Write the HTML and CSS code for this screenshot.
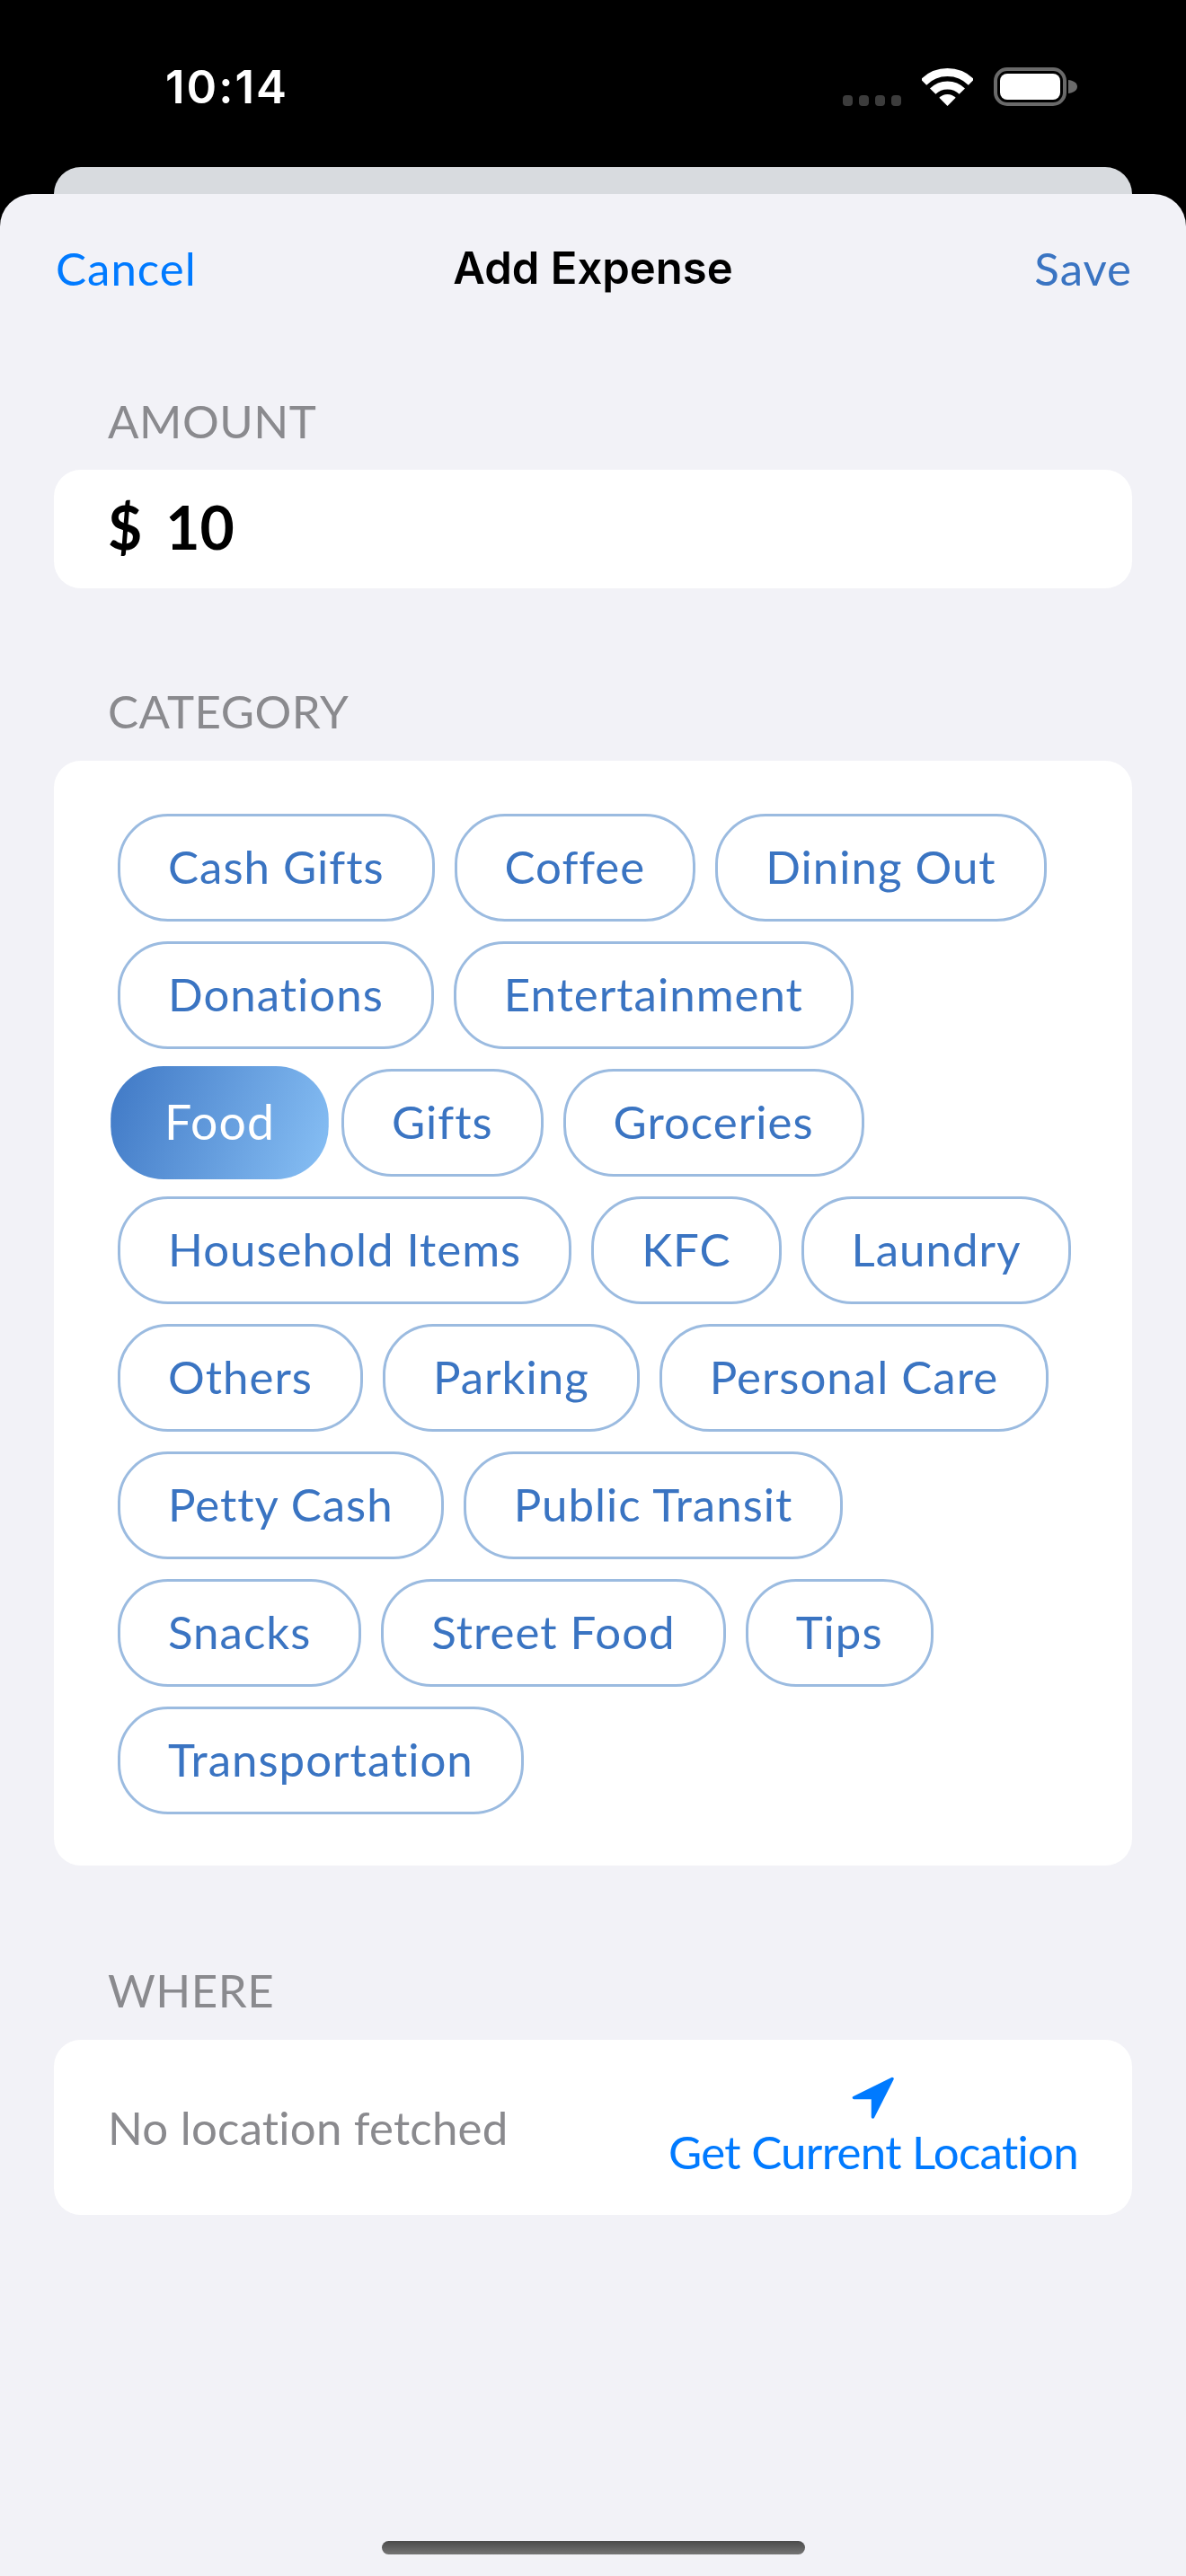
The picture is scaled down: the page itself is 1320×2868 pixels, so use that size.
FILE: index.html
```html
<!DOCTYPE html>
<html lang="en">
<head>
<meta charset="utf-8">
<title>Add Expense</title>
<link rel="stylesheet" href="styles.css">
</head>
<body>
<div class="phone">
  <header class="status">
    <span class="time">10:14</span>
    <div class="status-icons">
      <div class="dots"><i></i><i></i><i></i><i></i></div>
      <svg class="wifi" width="57" height="42" viewBox="0 0 57 42"><path d="M2 15.5A37.5 37.5 0 0 1 55 15.5" fill="none" stroke="#fff" stroke-width="9"/><path d="M12.2 25.7A23 23 0 0 1 44.8 25.7" fill="none" stroke="#fff" stroke-width="9"/><path d="M28.5 42L19.3 32.8A13 13 0 0 1 37.7 32.8Z" fill="#fff"/></svg>
      <svg class="battery" width="93" height="43" viewBox="0 0 93 43"><rect x="2" y="2" width="77" height="39" rx="13" fill="none" stroke="#6a6a6a" stroke-width="4"/><rect x="7" y="7" width="67" height="29" rx="8" fill="#fff"/><path d="M83 14C88 14.5 93 17 93 21.5S88 28.500 83 29Z" fill="#6a6a6a"/></svg>
    </div>
  </header>
  <div class="back-card"></div>
  <main class="sheet">
    <nav class="nav">
      <span class="nav-cancel">Cancel</span>
      <span class="nav-title">Add Expense</span>
      <span class="nav-save">Save</span>
    </nav>

    <h2 class="label label-first">AMOUNT</h2>
    <section class="card amount"><span class="currency">$</span><span>10</span></section>

    <h2 class="label">CATEGORY</h2>
    <section class="card chips">
      <div class="chip-row"><span class="chip">Cash Gifts</span><span class="chip">Coffee</span><span class="chip">Dining Out</span></div>
      <div class="chip-row"><span class="chip">Donations</span><span class="chip">Entertainment</span></div>
      <div class="chip-row"><span class="chip chip-active">Food</span><span class="chip">Gifts</span><span class="chip">Groceries</span></div>
      <div class="chip-row"><span class="chip">Household Items</span><span class="chip">KFC</span><span class="chip">Laundry</span></div>
      <div class="chip-row"><span class="chip">Others</span><span class="chip">Parking</span><span class="chip">Personal Care</span></div>
      <div class="chip-row"><span class="chip">Petty Cash</span><span class="chip">Public Transit</span></div>
      <div class="chip-row"><span class="chip">Snacks</span><span class="chip">Street Food</span><span class="chip">Tips</span></div>
      <div class="chip-row"><span class="chip">Transportation</span></div>
    </section>

    <h2 class="label label-where">WHERE</h2>
    <section class="card where">
      <span class="no-location">No location fetched</span>
      <div class="locate">
        <svg class="arrow" width="47" height="47" viewBox="0 0 47 47"><path d="M45 2.500L2.500 23.500H23.500V45Z" fill="#007aff" stroke="#007aff" stroke-width="3.500" stroke-linejoin="round"/></svg>
        <span class="locate-text">Get Current Location</span>
      </div>
    </section>

    <div class="home-bar"></div>
  </main>
</div>
</body>
</html>
```

FILE: styles.css
```css
* { box-sizing: border-box; }
html, body { margin: 0; padding: 0; background: #000; }
.phone {
  width: 1320px;
  height: 2868px;
  display: flex;
  flex-direction: column;
  background: #000;
  font-family: "Lato", "Noto Sans", sans-serif;
  overflow: hidden;
}
.status {
  height: 186px;
  flex: none;
  display: flex;
  justify-content: space-between;
  align-items: flex-start;
  padding: 75px 122px 0 184px;
}
.time {
  font-family: "Inter", sans-serif;
  font-size: 51px;
  font-weight: 600;
  letter-spacing: 2px;
  line-height: 44px;
  color: #fff;
}
.status-icons { display: flex; align-items: flex-end; gap: 23px; }
.dots { display: flex; gap: 7px; }
.dots i { width: 11px; height: 12px; border-radius: 4px; background: #3c3c3c; }
.wifi { display: block; }
.battery { display: block; margin-right: -1px; }
.back-card {
  height: 30px;
  flex: none;
  margin: 0 60px;
  background: #d8dbdf;
  border-radius: 36px 36px 0 0;
}
.sheet {
  flex: 1;
  display: flex;
  flex-direction: column;
  padding: 0 60px 24px;
  background: #f2f2f7;
  border-radius: 36px 36px 0 0;
}
.nav {
  height: 168px;
  flex: none;
  display: grid;
  grid-template-columns: 1fr auto 1fr;
  align-items: center;
  padding-bottom: 3px;
  font-size: 51px;
  letter-spacing: 1px;
}
.nav-cancel { color: #007aff; padding-left: 2px; }
.nav-title { font-family: "Inter", sans-serif; font-size: 49px; font-weight: 600; letter-spacing: 0; color: #000; }
.nav-save { color: #3a74c2; text-align: right; }
.label {
  margin: 102px 0 20px;
  padding-left: 60px;
  height: 70px;
  font-size: 51px;
  font-weight: 400;
  letter-spacing: 0.5px;
  line-height: 70px;
  color: #8a8a8e;
}
.label-first { margin-top: 50px; margin-bottom: 19px; }
.label-where { margin-top: 104px; }
.card { background: #fff; border-radius: 30px; flex: none; }
.amount {
  height: 132px;
  padding: 0 0 5px 60px;
  display: flex;
  align-items: center;
  gap: 26px;
  font-size: 66px;
  font-weight: 700;
  color: #000;
}
.chips {
  display: flex;
  flex-direction: column;
  gap: 22px;
  padding: 59px 71px 57px;
}
.chip-row { display: flex; gap: 22px; }
.chip {
  height: 120px;
  padding: 0 53px 4px;
  display: flex;
  align-items: center;
  border: 3px solid #9bbbe0;
  border-radius: 56px;
  font-size: 51px;
  letter-spacing: 1px;
  color: #3a74c2;
  white-space: nowrap;
}
.chip-active {
  margin: 0 -2px;
  padding: 0 57px 4px;
  border: 0;
  color: #fff;
  background: linear-gradient(110deg, #3f78c5, #88c0f5);
  transform: scale(1.05);
}
.where {
  height: 195px;
  padding: 0 60px;
  display: flex;
  justify-content: space-between;
  align-items: center;
}
.no-location { font-size: 51px; color: #8a8a8e; letter-spacing: 0.2px; }
.locate { display: flex; flex-direction: column; align-items: center; gap: 7px; }
.arrow { display: block; }
.locate-text { font-size: 51px; letter-spacing: -0.7px; line-height: 60px; color: #007aff; }
.home-bar {
  margin: auto auto 0;
  width: 471px;
  height: 15px;
  border-radius: 8px;
  background: linear-gradient(#4b4b4b, #757575);
}
```
